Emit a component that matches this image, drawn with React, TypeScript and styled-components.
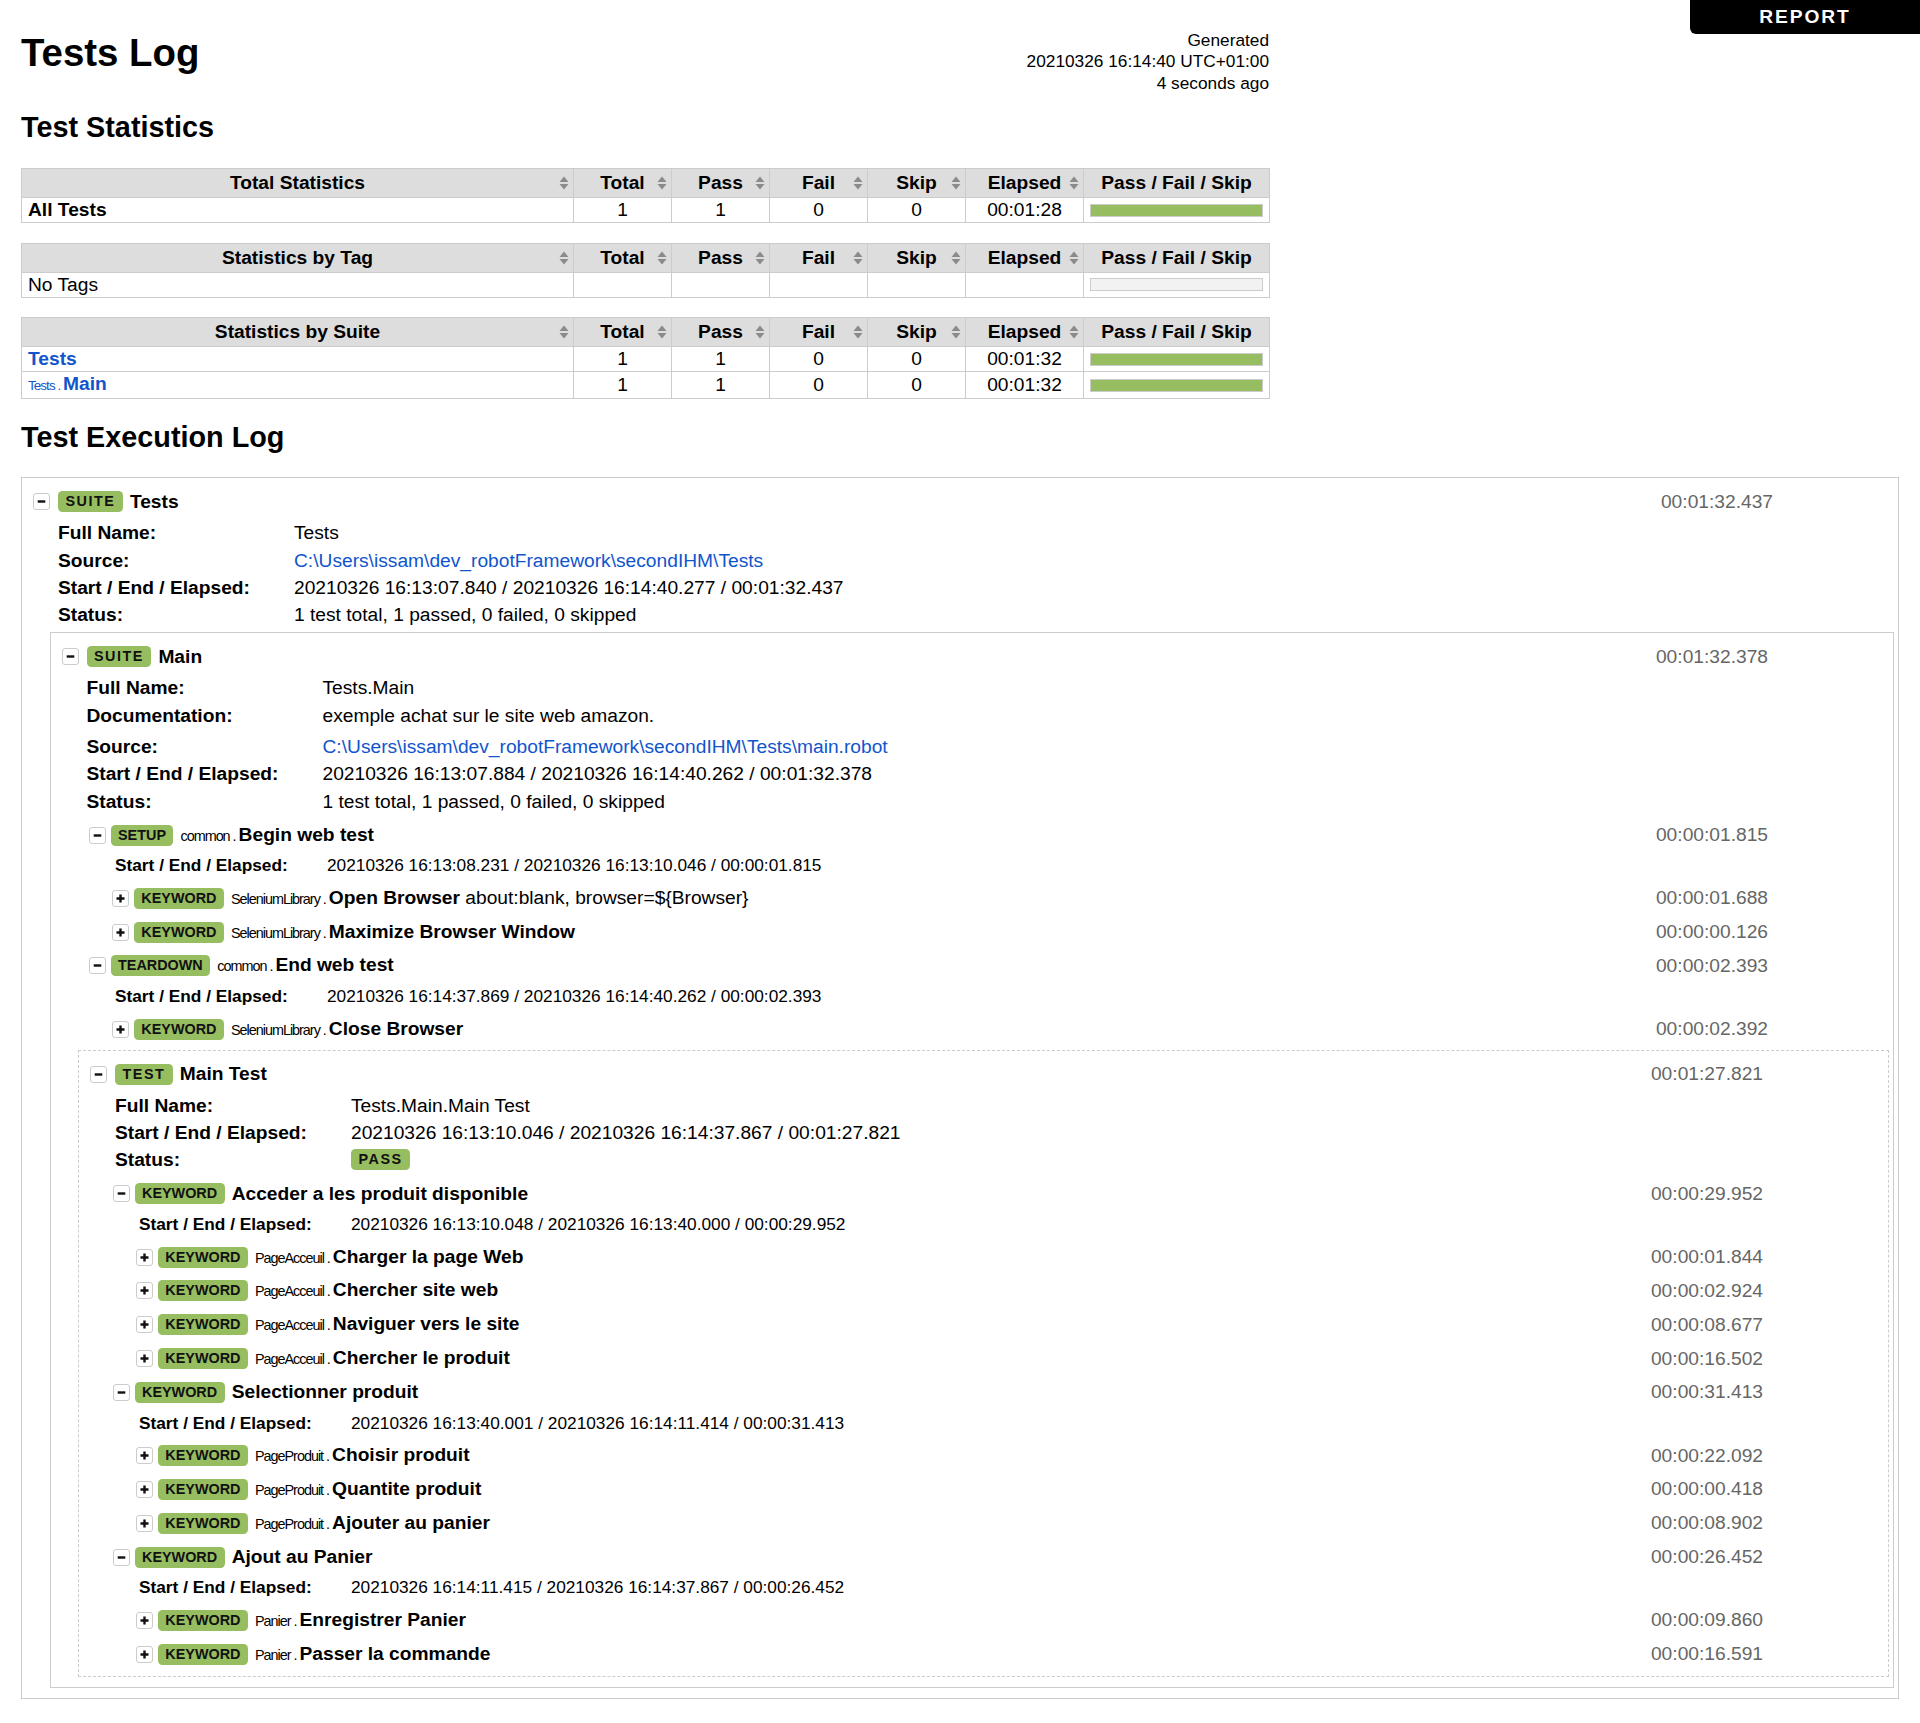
import React from 'react';
import styled, { createGlobalStyle } from 'styled-components';

const GlobalStyle = createGlobalStyle`
  html, body {
    margin: 0;
    padding: 0;
    background: #fff;
  }
  body {
    font-family: 'Liberation Sans', Arial, Helvetica, sans-serif;
    font-size: 19.2px;
    line-height: 22px;
    color: #000;
  }
  a {
    color: #15c;
    text-decoration: none;
  }
`;

const Page = styled.div`
  padding: 30px 21px 24px;
`;

const ReportLink = styled.a`
  position: fixed;
  top: 0;
  right: 0;
  width: 230px;
  padding: 6px 0;
  line-height: 22px;
  background: #000;
  color: #fff !important;
  font-weight: bold;
  letter-spacing: 0.1em;
  text-align: center;
  border-bottom-left-radius: 6px;
`;

const Header = styled.header`
  display: flex;
  justify-content: space-between;
  align-items: flex-start;
  width: 1248px;
  height: 57.6px;
`;

const PageTitle = styled.h1`
  margin: 0;
  font-size: 38.4px;
  line-height: 45px;
  font-weight: bold;
`;

const Generated = styled.div`
  text-align: right;
  font-size: 17.28px;
  line-height: 21.3px;
  white-space: nowrap;
`;

const SectionTitle = styled.h2`
  margin: 23.6px 0 24px;
  font-size: 28.8px;
  line-height: 33px;
  font-weight: bold;
`;

const LogTitle = styled(SectionTitle)`
  margin: 22px 0 23px;
`;

/* statistics tables */

const StatTable = styled.table`
  width: 1248px;
  table-layout: fixed;
  border-collapse: collapse;
  margin-bottom: 19.5px;
  font-size: 19.2px;
  line-height: 22px;
`;

const Col = styled.col<{ $w: number }>`
  width: ${(p) => p.$w}px;
`;

const HeadCell = styled.th`
  position: relative;
  background: #ddd;
  border: 1px solid #ccc;
  padding: 3px 6px;
  font-weight: bold;
  text-align: center;
  white-space: nowrap;
`;

const Cell = styled.td<{ $left?: boolean }>`
  border: 1px solid #ccc;
  padding: 1px 6px;
  text-align: ${(p) => (p.$left ? 'left' : 'center')};
  white-space: nowrap;
`;

const SortSvg = styled.svg`
  position: absolute;
  right: 4px;
  top: 50%;
  margin-top: -7px;
  width: 10px;
  height: 14px;
`;

const Graph = styled.div<{ $empty?: boolean }>`
  height: 11px;
  margin: 4.5px 0;
  border: 1px solid #ccc;
  background: ${(p) => (p.$empty ? '#f2f2f2' : '#97bd61')};
`;

const StatName = styled.span`
  font-weight: bold;
`;

const SmallParent = styled.span`
  font-size: 13.44px;
  letter-spacing: -0.07em;
  font-weight: normal;
`;

/* execution log */

const Box = styled.div<{ $dashed?: boolean }>`
  border: 1px ${(p) => (p.$dashed ? 'dashed' : 'solid')} #ccc;
  padding: 6.5px 4px 5px;
  margin: 3.5px 0 5px;
`;

const KwBlock = styled.div``;

const ElementHeader = styled.div<{ $pad: number }>`
  display: flex;
  align-items: center;
  height: 33.8px;
  padding: 0 121px 0 ${(p) => p.$pad}px;
`;

const ToggleBox = styled.span`
  flex: none;
  display: inline-flex;
  align-items: center;
  justify-content: center;
  box-sizing: border-box;
  width: 17px;
  height: 17px;
  border: 1px solid #ccc;
  border-radius: 3px;
  background: #fff;
`;

const Badge = styled.span<{ $spaced?: boolean; $gap?: number }>`
  flex: none;
  display: inline-block;
  vertical-align: top;
  margin-left: ${(p) => p.$gap ?? 0}px;
  padding: 0 7.5px;
  height: 21px;
  line-height: 21px;
  font-size: 14.4px;
  font-weight: bold;
  letter-spacing: ${(p) => (p.$spaced ? '1.5px' : '0')};
  background: #97bd61;
  border-radius: 4.5px;
  color: #111;
`;

const Title = styled.span`
  margin-left: 7px;
  white-space: nowrap;
`;

const ParentName = styled.span`
  font-size: 14.4px;
  letter-spacing: -0.07em;
`;

const Name = styled.span`
  font-weight: bold;
`;

const Elapsed = styled.span`
  margin-left: auto;
  color: #666;
  font-size: 19.2px;
  white-space: nowrap;
`;

const MetaTable = styled.table<{ $indent: number; $small?: boolean }>`
  margin: ${(p) => (p.$small ? 0 : 1.2)}px 0 ${(p) => (p.$small ? 2.5 : 3)}px ${(p) => p.$indent}px;
  border-collapse: collapse;
  font-size: ${(p) => (p.$small ? 17.28 : 19.2)}px;
  line-height: ${(p) => (p.$small ? 20 : 22)}px;
  th,
  td {
    padding: ${(p) => (p.$small ? 3.5 : 2.65)}px 0;
    vertical-align: top;
    white-space: nowrap;
  }
  th {
    width: ${(p) => (p.$small ? 212 : 236)}px;
    text-align: left;
    font-weight: bold;
  }
`;

const DocRow = styled.tr`
  th,
  td {
    padding-bottom: 6.65px;
  }
`;

const Children = styled.div<{ $indent: number }>`
  margin-left: ${(p) => p.$indent}px;
`;

/* pieces */

function SortIcon() {
  return (
    <SortSvg viewBox="0 0 10 14" aria-hidden>
      <path d="M0.5 6 L5 0.6 L9.5 6 Z M0.5 8 L9.5 8 L5 13.4 Z" fill="#8b8b8b" />
    </SortSvg>
  );
}

function ToggleButton({ open }: { open: boolean }) {
  return (
    <ToggleBox>
      <svg width="9" height="9" viewBox="0 0 9 9" aria-hidden>
        {open ? (
          <rect x="0.7" y="3.3" width="7.6" height="2.4" fill="#111" />
        ) : (
          <path d="M0.5 3.3 H8.5 V5.7 H0.5 Z M3.3 0.5 H5.7 V8.5 H3.3 Z" fill="#111" />
        )}
      </svg>
    </ToggleBox>
  );
}

type StatRow = {
  name: React.ReactNode;
  nums?: [string, string, string, string];
  elapsed?: string;
  pass: boolean;
};

const COLS = [552, 98, 98, 98, 98, 118, 186];

function Statistics({ title, rows }: { title: string; rows: StatRow[] }) {
  return (
    <StatTable>
      <colgroup>
        {COLS.map((w, i) => (
          <Col key={i} $w={w} />
        ))}
      </colgroup>
      <thead>
        <tr>
          <HeadCell>
            {title}
            <SortIcon />
          </HeadCell>
          {['Total', 'Pass', 'Fail', 'Skip', 'Elapsed'].map((h) => (
            <HeadCell key={h}>
              {h}
              <SortIcon />
            </HeadCell>
          ))}
          <HeadCell>Pass / Fail / Skip</HeadCell>
        </tr>
      </thead>
      <tbody>
        {rows.map((r, i) => (
          <tr key={i}>
            <Cell $left>{r.name}</Cell>
            {(r.nums ?? ['', '', '', '']).map((n, j) => (
              <Cell key={j}>{n}</Cell>
            ))}
            <Cell>{r.elapsed ?? ''}</Cell>
            <Cell>
              <Graph $empty={!r.pass} />
            </Cell>
          </tr>
        ))}
      </tbody>
    </StatTable>
  );
}

type KwNode = {
  label: 'KEYWORD' | 'SETUP' | 'TEARDOWN';
  owner?: string;
  name: string;
  args?: string;
  elapsed: string;
  times?: string;
  children?: KwNode[];
};

function Keyword({ kw }: { kw: KwNode }) {
  const open = !!kw.children;
  return (
    <KwBlock>
      <ElementHeader $pad={10.5}>
        <ToggleButton open={open} />
        <Badge $gap={5}>{kw.label}</Badge>
        <Title>
          {kw.owner && <ParentName>{kw.owner} . </ParentName>}
          <Name>{kw.name}</Name>
          {kw.args && <span> {kw.args}</span>}
        </Title>
        <Elapsed>{kw.elapsed}</Elapsed>
      </ElementHeader>
      {open && (
        <>
          <MetaTable $indent={37} $small>
            <tbody>
              <tr>
                <th>Start / End / Elapsed:</th>
                <td>{kw.times}</td>
              </tr>
            </tbody>
          </MetaTable>
          <Children $indent={23.3}>
            {kw.children!.map((c, i) => (
              <Keyword key={i} kw={c} />
            ))}
          </Children>
        </>
      )}
    </KwBlock>
  );
}

type MetaItem = { key: string; value: React.ReactNode; doc?: boolean };

function Element({
  label,
  name,
  elapsed,
  meta,
  dashed,
  childIndent,
  children,
}: {
  label: 'SUITE' | 'TEST';
  name: string;
  elapsed: string;
  meta: MetaItem[];
  dashed?: boolean;
  childIndent: number;
  children?: React.ReactNode;
}) {
  return (
    <Box $dashed={dashed}>
      <ElementHeader $pad={7}>
        <ToggleButton open />
        <Badge $spaced $gap={8}>
          {label}
        </Badge>
        <Title>
          <Name>{name}</Name>
        </Title>
        <Elapsed>{elapsed}</Elapsed>
      </ElementHeader>
      <MetaTable $indent={32}>
        <tbody>
          {meta.map((m) =>
            m.doc ? (
              <DocRow key={m.key}>
                <th>{m.key}</th>
                <td>{m.value}</td>
              </DocRow>
            ) : (
              <tr key={m.key}>
                <th>{m.key}</th>
                <td>{m.value}</td>
              </tr>
            )
          )}
        </tbody>
      </MetaTable>
      <Children $indent={childIndent}>{children}</Children>
    </Box>
  );
}

const setup: KwNode = {
  label: 'SETUP',
  owner: 'common',
  name: 'Begin web test',
  elapsed: '00:00:01.815',
  times: '20210326 16:13:08.231 / 20210326 16:13:10.046 / 00:00:01.815',
  children: [
    {
      label: 'KEYWORD',
      owner: 'SeleniumLibrary',
      name: 'Open Browser',
      args: 'about:blank, browser=${Browser}',
      elapsed: '00:00:01.688',
    },
    { label: 'KEYWORD', owner: 'SeleniumLibrary', name: 'Maximize Browser Window', elapsed: '00:00:00.126' },
  ],
};

const teardown: KwNode = {
  label: 'TEARDOWN',
  owner: 'common',
  name: 'End web test',
  elapsed: '00:00:02.393',
  times: '20210326 16:14:37.869 / 20210326 16:14:40.262 / 00:00:02.393',
  children: [{ label: 'KEYWORD', owner: 'SeleniumLibrary', name: 'Close Browser', elapsed: '00:00:02.392' }],
};

const testSteps: KwNode[] = [
  {
    label: 'KEYWORD',
    name: 'Acceder a les produit disponible',
    elapsed: '00:00:29.952',
    times: '20210326 16:13:10.048 / 20210326 16:13:40.000 / 00:00:29.952',
    children: [
      { label: 'KEYWORD', owner: 'PageAcceuil', name: 'Charger la page Web', elapsed: '00:00:01.844' },
      { label: 'KEYWORD', owner: 'PageAcceuil', name: 'Chercher site web', elapsed: '00:00:02.924' },
      { label: 'KEYWORD', owner: 'PageAcceuil', name: 'Naviguer vers le site', elapsed: '00:00:08.677' },
      { label: 'KEYWORD', owner: 'PageAcceuil', name: 'Chercher le produit', elapsed: '00:00:16.502' },
    ],
  },
  {
    label: 'KEYWORD',
    name: 'Selectionner produit',
    elapsed: '00:00:31.413',
    times: '20210326 16:13:40.001 / 20210326 16:14:11.414 / 00:00:31.413',
    children: [
      { label: 'KEYWORD', owner: 'PageProduit', name: 'Choisir produit', elapsed: '00:00:22.092' },
      { label: 'KEYWORD', owner: 'PageProduit', name: 'Quantite produit', elapsed: '00:00:00.418' },
      { label: 'KEYWORD', owner: 'PageProduit', name: 'Ajouter au panier', elapsed: '00:00:08.902' },
    ],
  },
  {
    label: 'KEYWORD',
    name: 'Ajout au Panier',
    elapsed: '00:00:26.452',
    times: '20210326 16:14:11.415 / 20210326 16:14:37.867 / 00:00:26.452',
    children: [
      { label: 'KEYWORD', owner: 'Panier', name: 'Enregistrer Panier', elapsed: '00:00:09.860' },
      { label: 'KEYWORD', owner: 'Panier', name: 'Passer la commande', elapsed: '00:00:16.591' },
    ],
  },
];

export default function App() {
  return (
    <Page>
      <GlobalStyle />
      <ReportLink href="#report">REPORT</ReportLink>

      <Header>
        <PageTitle>Tests Log</PageTitle>
        <Generated>
          Generated
          <br />
          20210326 16:14:40 UTC+01:00
          <br />4 seconds ago
        </Generated>
      </Header>

      <SectionTitle>Test Statistics</SectionTitle>
      <Statistics
        title="Total Statistics"
        rows={[{ name: <StatName>All Tests</StatName>, nums: ['1', '1', '0', '0'], elapsed: '00:01:28', pass: true }]}
      />
      <Statistics title="Statistics by Tag" rows={[{ name: 'No Tags', pass: false }]} />
      <Statistics
        title="Statistics by Suite"
        rows={[
          {
            name: (
              <a href="#s1">
                <StatName>Tests</StatName>
              </a>
            ),
            nums: ['1', '1', '0', '0'],
            elapsed: '00:01:32',
            pass: true,
          },
          {
            name: (
              <a href="#s1-s1">
                <SmallParent>Tests . </SmallParent>
                <StatName>Main</StatName>
              </a>
            ),
            nums: ['1', '1', '0', '0'],
            elapsed: '00:01:32',
            pass: true,
          },
        ]}
      />

      <LogTitle>Test Execution Log</LogTitle>
      <Element
        label="SUITE"
        name="Tests"
        elapsed="00:01:32.437"
        childIndent={23.5}
        meta={[
          { key: 'Full Name:', value: 'Tests' },
          { key: 'Source:', value: <a href="#src">C:\Users\issam\dev_robotFramework\secondIHM\Tests</a> },
          { key: 'Start / End / Elapsed:', value: '20210326 16:13:07.840 / 20210326 16:14:40.277 / 00:01:32.437' },
          { key: 'Status:', value: '1 test total, 1 passed, 0 failed, 0 skipped' },
        ]}
      >
        <Element
          label="SUITE"
          name="Main"
          elapsed="00:01:32.378"
          childIndent={23.5}
          meta={[
            { key: 'Full Name:', value: 'Tests.Main' },
            { key: 'Documentation:', value: 'exemple achat sur le site web amazon.', doc: true },
            {
              key: 'Source:',
              value: <a href="#src-main">C:\Users\issam\dev_robotFramework\secondIHM\Tests\main.robot</a>,
            },
            { key: 'Start / End / Elapsed:', value: '20210326 16:13:07.884 / 20210326 16:14:40.262 / 00:01:32.378' },
            { key: 'Status:', value: '1 test total, 1 passed, 0 failed, 0 skipped' },
          ]}
        >
          <Keyword kw={setup} />
          <Keyword kw={teardown} />
          <Element
            label="TEST"
            name="Main Test"
            elapsed="00:01:27.821"
            dashed
            childIndent={19}
            meta={[
              { key: 'Full Name:', value: 'Tests.Main.Main Test' },
              { key: 'Start / End / Elapsed:', value: '20210326 16:13:10.046 / 20210326 16:14:37.867 / 00:01:27.821' },
              { key: 'Status:', value: <Badge $spaced>PASS</Badge> },
            ]}
          >
            {testSteps.map((k, i) => (
              <Keyword key={i} kw={k} />
            ))}
          </Element>
        </Element>
      </Element>
    </Page>
  );
}
